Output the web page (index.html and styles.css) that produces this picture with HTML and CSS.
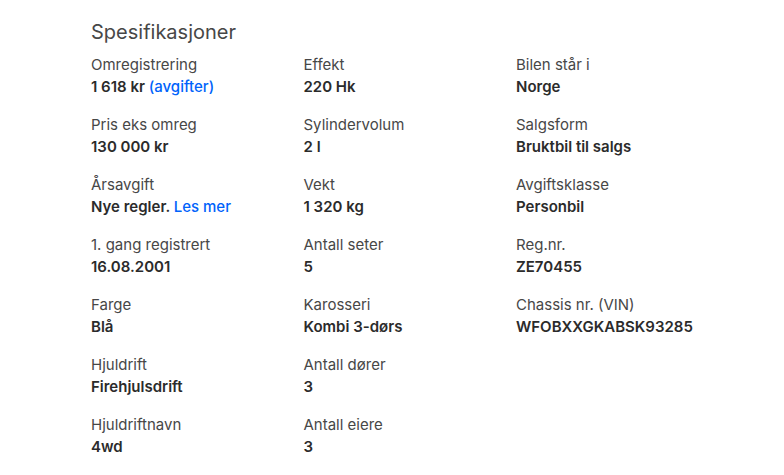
FILE: index.html
```html
<!DOCTYPE html>
<html lang="no">
<head>
<meta charset="utf-8">
<link rel="stylesheet" href="styles.css">
</head>
<body>
<section class="specs">
  <h2 class="title">Spesifikasjoner</h2>
  <dl class="grid">
    <div class="item"><dt>Omregistrering</dt><dd>1 618 kr <a href="#">(avgifter)</a></dd></div>
    <div class="item"><dt>Effekt</dt><dd>220 Hk</dd></div>
    <div class="item"><dt>Bilen står i</dt><dd>Norge</dd></div>
    <div class="item"><dt>Pris eks omreg</dt><dd>130 000 kr</dd></div>
    <div class="item"><dt>Sylindervolum</dt><dd>2 l</dd></div>
    <div class="item"><dt>Salgsform</dt><dd>Bruktbil til salgs</dd></div>
    <div class="item"><dt>Årsavgift</dt><dd>Nye regler. <a href="#">Les mer</a></dd></div>
    <div class="item"><dt>Vekt</dt><dd>1 320 kg</dd></div>
    <div class="item"><dt>Avgiftsklasse</dt><dd>Personbil</dd></div>
    <div class="item"><dt>1. gang registrert</dt><dd>16.08.2001</dd></div>
    <div class="item"><dt>Antall seter</dt><dd>5</dd></div>
    <div class="item"><dt>Reg.nr.</dt><dd>ZE70455</dd></div>
    <div class="item"><dt>Farge</dt><dd>Blå</dd></div>
    <div class="item"><dt>Karosseri</dt><dd>Kombi 3-dørs</dd></div>
    <div class="item"><dt>Chassis nr. (VIN)</dt><dd>WFOBXXGKABSK93285</dd></div>
    <div class="item"><dt>Hjuldrift</dt><dd>Firehjulsdrift</dd></div>
    <div class="item"><dt>Antall dører</dt><dd>3</dd></div>
    <div class="item empty"></div>
    <div class="item"><dt>Hjuldriftnavn</dt><dd>4wd</dd></div>
    <div class="item"><dt>Antall eiere</dt><dd>3</dd></div>
  </dl>
</section>
</body>
</html>
```

FILE: styles.css
```css
html, body {
  margin: 0;
  padding: 0;
  background: #ffffff;
}
body {
  font-family: Inter, "Noto Sans", "Liberation Sans", sans-serif;
  color: #464646;
}
.specs {
  padding: 18px 0 0 91px;
  width: 638px;
}
.title {
  margin: 0;
  font-size: 20px;
  line-height: 28px;
  font-weight: 400;
  color: #474747;
}
.grid {
  margin: 8px 0 0 0;
  display: grid;
  grid-template-columns: repeat(3, 212.5px);
  row-gap: 17px;
}
.item {
  display: flex;
  flex-direction: column;
}
dt {
  font-size: 15px;
  line-height: 21px;
  font-weight: 400;
  color: #474747;
}
dd {
  margin: 1px 0 0 0;
  font-size: 15px;
  line-height: 21px;
  font-weight: 600;
  color: #2b2b2b;
}
dd a {
  color: #0063fb;
  text-decoration: none;
  font-weight: 500;
}
```
